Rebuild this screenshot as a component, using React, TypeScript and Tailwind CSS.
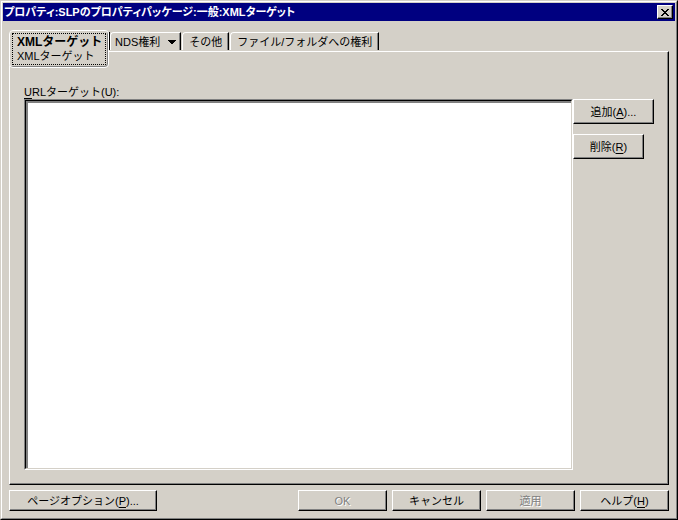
import type { ButtonHTMLAttributes, ReactNode } from 'react';
import clsx from 'clsx';

interface DialogButtonProps extends ButtonHTMLAttributes<HTMLButtonElement> {
  children: ReactNode;
}

function DialogButton({ children, className, ...rest }: DialogButtonProps) {
  return (
    <button
      type="button"
      className={clsx(
        'border border-t-white border-l-white border-r-black border-b-black bg-[#d4d0c8] text-center whitespace-nowrap text-black underline-offset-2 shadow-[inset_-1px_-1px_0_#808080]',
        'disabled:text-[#808080] disabled:[text-shadow:1px_1px_0_#fff]',
        className,
      )}
      {...rest}
    >
      {children}
    </button>
  );
}

interface TabProps {
  label: string;
  hasMenu?: boolean;
}

function Tab({ label, hasMenu }: TabProps) {
  return (
    <button
      type="button"
      role="tab"
      aria-selected={false}
      className={clsx(
        'mr-px flex h-[18px] items-center gap-2 rounded-tl-sm border-t border-r border-l border-t-white border-r-black border-l-white whitespace-nowrap shadow-[inset_-1px_0_0_#808080]',
        hasMenu ? 'px-1' : 'px-1.5',
      )}
    >
      {label}
      {hasMenu && (
        <svg width="8" height="4" viewBox="0 0 8 4" shapeRendering="crispEdges" aria-hidden="true">
          <path d="M0 0h8v1h-1v1h-1v1h-1v1h-2v-1h-1v-1h-1v-1h-1z" fill="black" />
        </svg>
      )}
    </button>
  );
}

export default function App() {
  return (
    <main className="flex h-screen flex-col border border-t-[#d4d0c8] border-r-black border-b-black border-l-[#d4d0c8] bg-[#d4d0c8] font-['Liberation_Sans','Noto_Sans_CJK_JP',sans-serif] text-[11px] leading-[14px] text-black">
      <div className="flex flex-1 flex-col border border-t-white border-r-[#808080] border-b-[#808080] border-l-white p-px">
        <header className="flex h-[18px] items-center justify-between bg-[#000080] pr-0.5 pl-px text-white">
          <h1 className="text-[11px] font-bold whitespace-nowrap [font-feature-settings:'palt']">
            プロパティ:SLPのプロパティパッケージ:一般:XMLターゲット
          </h1>
          <button
            type="button"
            aria-label="閉じる"
            className="flex h-3.5 w-4 items-center justify-center border border-t-white border-r-black border-b-black border-l-white bg-[#d4d0c8] shadow-[inset_-1px_-1px_0_#808080]"
          >
            <svg width="8" height="7" viewBox="0 0 8 7" shapeRendering="crispEdges" aria-hidden="true">
              <path
                d="M0 0h2v1h1v1h2v-1h1v-1h2v1h-1v1h-1v1h-1v1h1v1h1v1h1v1h-2v-1h-1v-1h-2v1h-1v1h-2v-1h1v-1h1v-1h1v-1h-1v-1h-1v-1h-1z"
                fill="black"
              />
            </svg>
          </button>
        </header>

        <div className="flex flex-1 flex-col px-1.5 pt-[9px] pb-1.5">
          <div role="tablist" className="z-10 -mb-[17px] flex items-start">
            <button
              type="button"
              role="tab"
              aria-selected="true"
              className="h-[38px] w-[100px] rounded-sm border border-white bg-[#d4d0c8] p-0.5 text-left shadow-[inset_-1px_-1px_0_#808080]"
            >
              <span className="flex h-full flex-col justify-center border border-dotted border-black px-1 whitespace-nowrap">
                <span className="text-[12px] font-bold">XMLターゲット</span>
                <span>XMLターゲット</span>
              </span>
            </button>
            <div className="mt-0.5 flex border-l border-black">
              <Tab label="NDS権利" hasMenu />
              <Tab label="その他" />
              <Tab label="ファイル/フォルダへの権利" />
            </div>
          </div>

          <section
            role="tabpanel"
            className="flex flex-1 flex-col border border-t-white border-r-black border-b-black border-l-white pt-[33px] pb-3.5 pl-3.5 shadow-[inset_-1px_-1px_0_#808080]"
          >
            <label htmlFor="url-targets" className="h-3.5 underline-offset-2">
              <u>U</u>RLターゲット(U):
            </label>
            <div className="flex flex-1">
              <div className="flex flex-1 border border-t-[#808080] border-r-white border-b-white border-l-[#808080]">
                <div className="flex flex-1 border border-t-black border-r-[#d4d0c8] border-b-[#d4d0c8] border-l-black">
                  <select
                    id="url-targets"
                    multiple
                    className="flex-1 appearance-none border-t-2 border-l-2 border-[#808080] bg-white outline-none"
                  />
                </div>
              </div>
              <div className="flex w-[95px] flex-col items-start gap-2.5">
                <DialogButton className="h-[25px] w-[81px]">
                  追加(<u>A</u>)...
                </DialogButton>
                <DialogButton className="h-[25px] w-[71px]">
                  削除(<u>R</u>)
                </DialogButton>
              </div>
            </div>
          </section>

          <footer className="flex gap-[5px] pt-[5px]">
            <DialogButton className="mr-auto h-[21px] w-[148px]">
              ページオプション(<u>P</u>)...
            </DialogButton>
            <DialogButton className="h-[21px] w-[89px]" disabled>
              OK
            </DialogButton>
            <DialogButton className="h-[21px] w-[89px]">キャンセル</DialogButton>
            <DialogButton className="h-[21px] w-[89px]" disabled>
              適用
            </DialogButton>
            <DialogButton className="h-[21px] w-[89px]">
              ヘルプ(<u>H</u>)
            </DialogButton>
          </footer>
        </div>
      </div>
    </main>
  );
}
